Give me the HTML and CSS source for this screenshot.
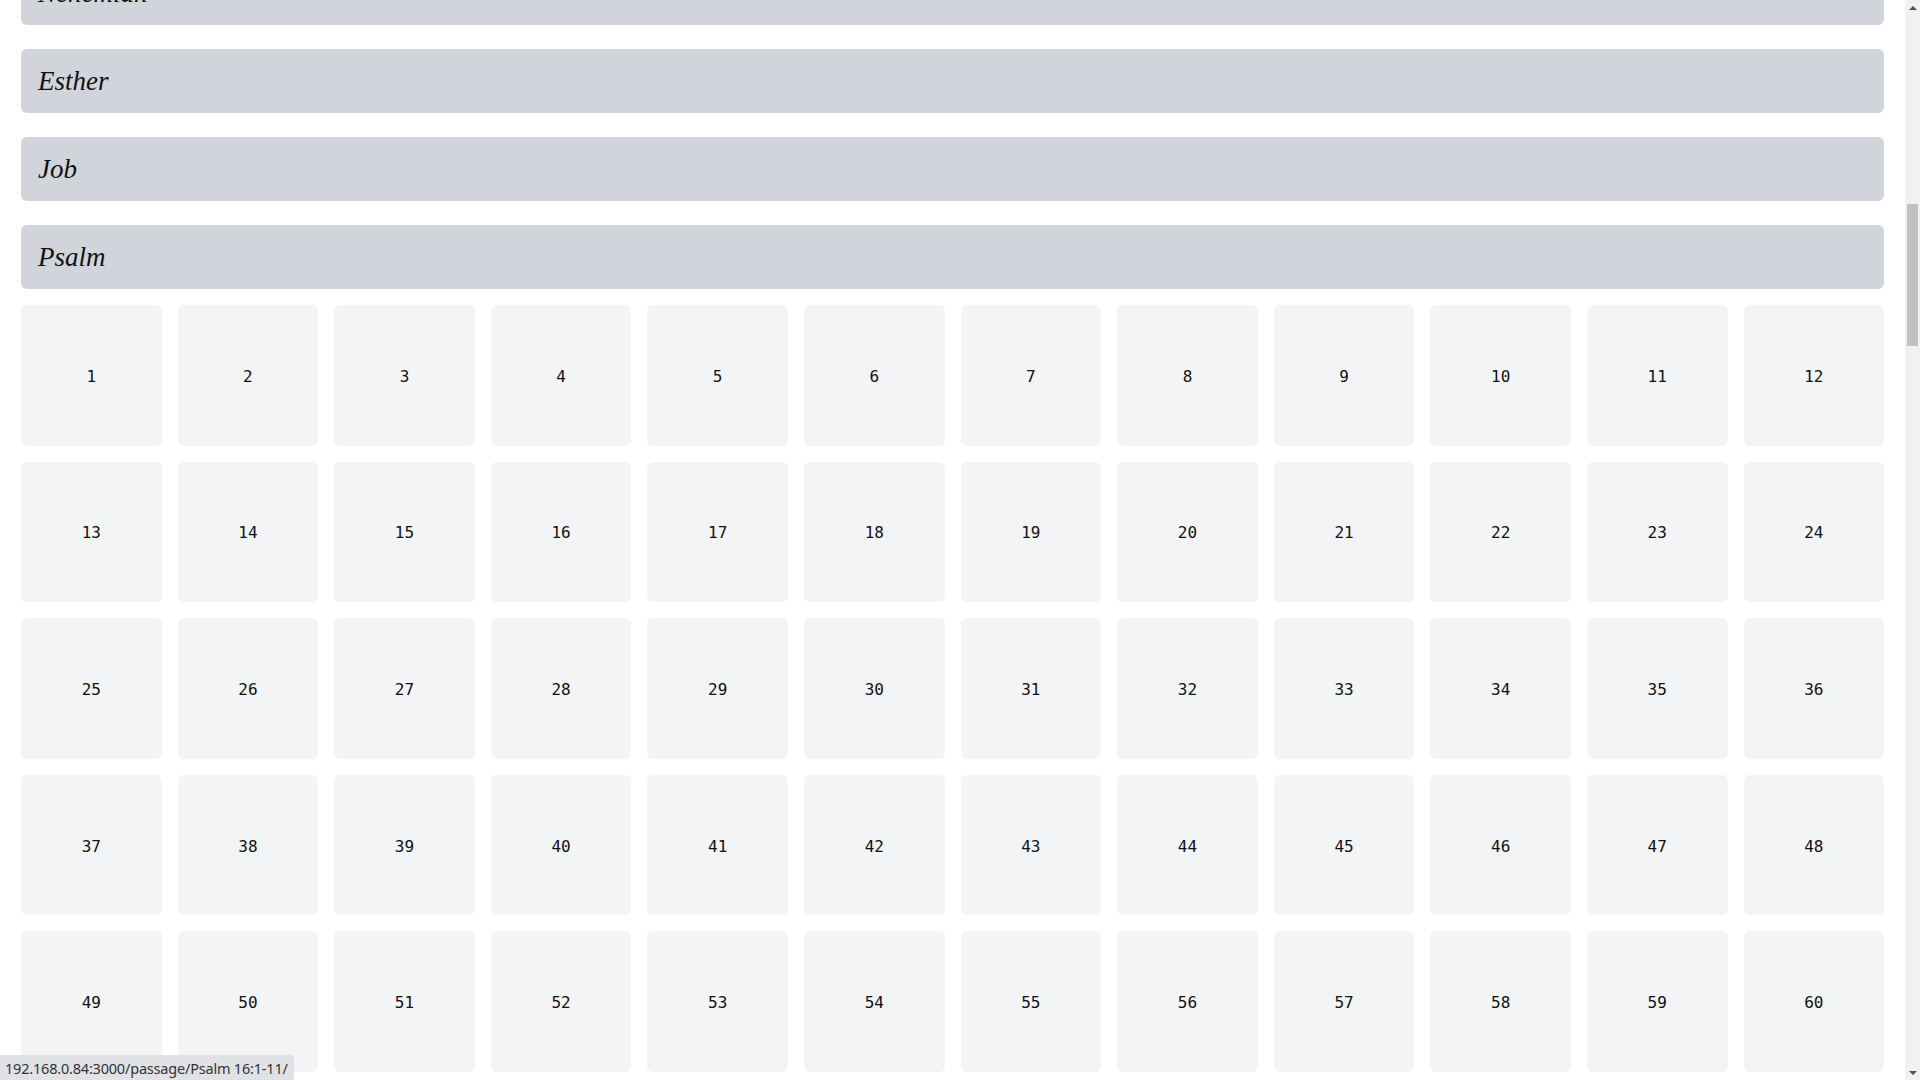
FILE: index.html
```html
<!DOCTYPE html>
<html lang="en">
<head>
<meta charset="utf-8">
<title>Books</title>
<link rel="stylesheet" href="styles.css">
</head>
<body>
<div class="window">
  <main class="page">
    <div class="scroller">
      <section class="book first"><h2 class="book-title">Nehemiah</h2></section>
      <section class="book"><h2 class="book-title">Esther</h2></section>
      <section class="book"><h2 class="book-title">Job</h2></section>
      <section class="book open">
        <h2 class="book-title">Psalm</h2>
        <div class="chapters">
          <a class="chapter">1</a><a class="chapter">2</a><a class="chapter">3</a><a class="chapter">4</a><a class="chapter">5</a><a class="chapter">6</a><a class="chapter">7</a><a class="chapter">8</a><a class="chapter">9</a><a class="chapter">10</a><a class="chapter">11</a><a class="chapter">12</a>
          <a class="chapter">13</a><a class="chapter">14</a><a class="chapter">15</a><a class="chapter">16</a><a class="chapter">17</a><a class="chapter">18</a><a class="chapter">19</a><a class="chapter">20</a><a class="chapter">21</a><a class="chapter">22</a><a class="chapter">23</a><a class="chapter">24</a>
          <a class="chapter">25</a><a class="chapter">26</a><a class="chapter">27</a><a class="chapter">28</a><a class="chapter">29</a><a class="chapter">30</a><a class="chapter">31</a><a class="chapter">32</a><a class="chapter">33</a><a class="chapter">34</a><a class="chapter">35</a><a class="chapter">36</a>
          <a class="chapter">37</a><a class="chapter">38</a><a class="chapter">39</a><a class="chapter">40</a><a class="chapter">41</a><a class="chapter">42</a><a class="chapter">43</a><a class="chapter">44</a><a class="chapter">45</a><a class="chapter">46</a><a class="chapter">47</a><a class="chapter">48</a>
          <a class="chapter">49</a><a class="chapter">50</a><a class="chapter">51</a><a class="chapter">52</a><a class="chapter">53</a><a class="chapter">54</a><a class="chapter">55</a><a class="chapter">56</a><a class="chapter">57</a><a class="chapter">58</a><a class="chapter">59</a><a class="chapter">60</a>
          <a class="chapter">61</a><a class="chapter">62</a><a class="chapter">63</a><a class="chapter">64</a><a class="chapter">65</a><a class="chapter">66</a><a class="chapter">67</a><a class="chapter">68</a><a class="chapter">69</a><a class="chapter">70</a><a class="chapter">71</a><a class="chapter">72</a>
        </div>
      </section>
    </div>
  </main>
  <div class="scrollbar">
    <div class="sb-arrow up"></div>
    <div class="sb-track"><div class="sb-thumb"></div></div>
    <div class="sb-arrow down"></div>
  </div>
</div>
<div class="status">192.168.0.84:3000/passage/Psalm 16:1-11/</div>
</body>
</html>
```
FILE: styles.css
```css
html, body {
  margin: 0;
  padding: 0;
  height: 100%;
  overflow: hidden;
  background: #ffffff;
}

.window {
  display: flex;
  width: 1920px;
  height: 1080px;
}

.page {
  flex: 1;
  height: 1080px;
  overflow: hidden;
}

.scroller {
  padding: 0 21px;
  margin-top: -39px;
}

.book {
  margin-bottom: 24px;
}

.book-title {
  margin: 0;
  height: 64px;
  display: flex;
  align-items: center;
  padding: 0 16px 0 17px;
  background: #d1d5db;
  border-radius: 6px;
  font-family: "Liberation Serif", serif;
  font-style: italic;
  font-weight: normal;
  font-size: 27px;
  color: #111111;
  box-sizing: border-box;
}

.chapters {
  margin-top: 16px;
  display: grid;
  grid-template-columns: repeat(12, 1fr);
  gap: 16px;
}

.chapter {
  aspect-ratio: 1 / 1;
  display: flex;
  align-items: center;
  justify-content: center;
  padding-top: 2px;
  box-sizing: border-box;
  background: #f3f4f6;
  border-radius: 6px;
  font-family: "DejaVu Sans Mono", monospace;
  font-size: 16px;
  color: #111111;
  text-decoration: none;
}

.scrollbar {
  width: 15px;
  height: 1080px;
  background: #f1f1f1;
  display: flex;
  flex-direction: column;
}

.sb-arrow {
  height: 15px;
  display: flex;
  align-items: center;
  justify-content: center;
}

.sb-arrow::before {
  content: "";
  width: 0;
  height: 0;
  border-left: 4px solid transparent;
  border-right: 4px solid transparent;
}

.sb-arrow.up::before {
  border-bottom: 4px solid #505050;
}

.sb-arrow.down::before {
  border-top: 4px solid #505050;
}

.sb-track {
  flex: 1;
  padding-top: 189px;
}

.sb-thumb {
  margin: 0 2px;
  height: 142px;
  background: #c1c1c1;
}

.status {
  position: fixed;
  left: 0;
  bottom: 0;
  height: 25px;
  padding: 0 6px 0 5px;
  display: flex;
  align-items: center;
  background: #e1e2e6;
  border-top-right-radius: 4px;
  font-family: "Noto Sans", "DejaVu Sans", sans-serif;
  font-size: 14.5px;
  letter-spacing: -0.2px;
  color: #333333;
  box-sizing: border-box;
}
```
